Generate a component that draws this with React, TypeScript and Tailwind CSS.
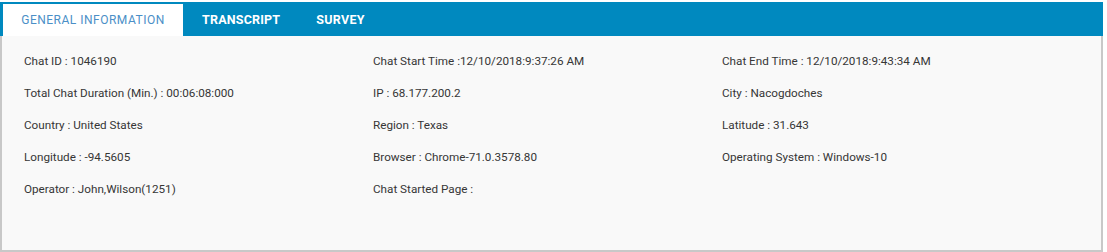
const rows: string[][] = [
  ['Chat ID : 1046190', 'Chat Start Time :12/10/2018:9:37:26 AM', 'Chat End Time : 12/10/2018:9:43:34 AM'],
  ['Total Chat Duration (Min.) : 00:06:08:000', 'IP : 68.177.200.2', 'City : Nacogdoches'],
  ['Country : United States', 'Region : Texas', 'Latitude : 31.643'],
  ['Longitude : -94.5605', 'Browser : Chrome-71.0.3578.80', 'Operating System : Windows-10'],
  ['Operator : John,Wilson(1251)', 'Chat Started Page :', ''],
];

export default function App() {
  return (
    <div className="w-[1107px] h-[252px] bg-white pt-[2px]" style={{ fontFamily: 'Roboto, "Liberation Sans", sans-serif' }}>
      <div className="w-[1103px] h-[250px] flex flex-col">
        {/* tabs */}
        <div className="h-[34px] bg-[#0089bf] flex items-end pl-[3px] shrink-0">
          <div className="h-[32px] w-[180px] bg-white flex items-center justify-center text-[12px] tracking-[0.5px] text-[#4b8fc7]">
            GENERAL INFORMATION
          </div>
          <div className="h-[32px] flex items-center pl-[19px] pr-[36px] text-[12.5px] tracking-[0.2px] font-bold text-white">TRANSCRIPT</div>
          <div className="h-[32px] flex items-center text-[12.5px] tracking-[0.3px] font-bold text-white">SURVEY</div>
        </div>
        {/* details */}
        <div className="flex-1 bg-[#f9f9f9] border-x-2 border-b-2 border-[#c8c8c8] pl-[22px] pt-[10px]">
          <div className="grid grid-cols-[349px_349px_349px]">
            {rows.flat().map((t, i) => (
              <div key={i} className="h-[32px] flex items-center text-[11.7px] text-[#363636]">
                {t}
              </div>
            ))}
          </div>
        </div>
      </div>
    </div>
  );
}
